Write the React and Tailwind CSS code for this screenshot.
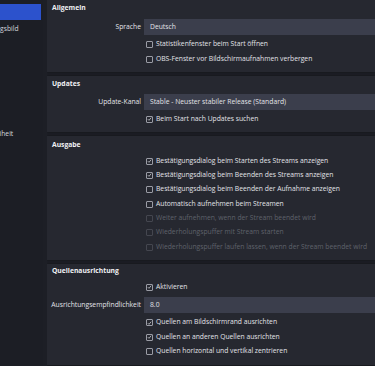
import React from "react";

const font = { fontFamily: "'Open Sans', 'Noto Sans', sans-serif" };

const sidebarItems = [
  "Allgemein",
  "Erscheinungsbild",
  "Stream",
  "Ausgabe",
  "Audio",
  "Video",
  "Hotkeys",
  "Barrierefreiheit",
  "Erweitert",
];

const Check = ({ checked, disabled, label, h = "h-[14.5px]" }) => (
  <div className={`flex items-center ${h}`}>
    <div className="w-[97px] shrink-0" />
    <div
      className={`ml-[2px] w-[7px] h-[7px] rounded-[1px] border flex items-center justify-center ${
        disabled ? "border-[#44464f]" : "border-[#9a9ca5]"
      }`}
    >
      {checked && (
        <svg width="6" height="6" viewBox="0 0 6 6">
          <path d="M1 3.2 L2.4 4.6 L5 1.4" stroke="#d8d9de" strokeWidth="0.9" fill="none" />
        </svg>
      )}
    </div>
    <span
      className={`ml-[3px] whitespace-nowrap ${
        disabled ? "text-[#5f626b]" : "text-[#e2e3e8]"
      }`}
    >
      {label}
    </span>
  </div>
);

const Field = ({ label, value, h = "h-[16px]" }) => (
  <div className={`flex items-center ${h}`}>
    <div className="w-[94px] shrink-0 text-right text-[#e2e3e8] whitespace-nowrap">{label}</div>
    <div className="ml-[3px] flex-1 h-full bg-[#3b3e4c] flex items-center pl-[6px] text-[#e2e3e8] whitespace-nowrap">
      {value}
    </div>
  </div>
);

const Box = ({ title, className = "", children }) => (
  <div className={`bg-[#262830] shadow-[0_0_2px_rgba(0,0,0,0.5)] ${className}`}>
    <div className="pl-[5px] h-[10px] leading-[10px] font-bold text-[#f0f1f4]">{title}</div>
    {children}
  </div>
);

export default function App() {
  return (
    <div
      className="w-[375px] h-[366px] overflow-hidden bg-[#1d1f26] flex text-[6.75px] leading-none"
      style={font}
    >
      {/* sidebar */}
      <div className="w-[43px] shrink-0 pr-[2px] pt-[4px] flex flex-col gap-[1.5px] bg-[#1c1e25] overflow-hidden">
        {sidebarItems.map((item, i) => (
          <div
            key={item}
            className={`h-[16px] flex items-center overflow-hidden ${
              i === 0 ? "bg-[#2c52cc]" : ""
            }`}
          >
            <span className="ml-[-35px] whitespace-nowrap text-[#d6d8de]">{item}</span>
          </div>
        ))}
      </div>

      {/* content */}
      <div className="flex-1 ml-[4px] flex flex-col overflow-hidden">
        <Box title="Allgemein" className="pt-[3px] pb-[5px]">
          <div className="mt-[6px]">
            <Field label="Sprache" value="Deutsch" />
          </div>
          <div className="mt-[2px]">
            <Check label="Statistikenfenster beim Start öffnen" h="h-[15px]" />
            <Check label="OBS-Fenster vor Bildschirmaufnahmen verbergen" h="h-[15px]" />
          </div>
        </Box>

        <Box title="Updates" className="mt-[4px] pt-[3px] pb-[6px]">
          <div className="mt-[5px]">
            <Field label="Update-Kanal" value="Stable - Neuster stabiler Release (Standard)" />
          </div>
          <div className="mt-[2px]">
            <Check checked label="Beim Start nach Updates suchen" h="h-[14px]" />
          </div>
        </Box>

        <Box title="Ausgabe" className="mt-[4px] pt-[4px] pb-[6px]">
          <div className="mt-[4px]">
            <Check checked label="Bestätigungsdialog beim Starten des Streams anzeigen" h="h-[14.33px]" />
            <Check checked label="Bestätigungsdialog beim Beenden des Streams anzeigen" h="h-[14.33px]" />
            <Check label="Bestätigungsdialog beim Beenden der Aufnahme anzeigen" h="h-[14.33px]" />
            <Check label="Automatisch aufnehmen beim Streamen" h="h-[14.33px]" />
            <Check disabled label="Weiter aufnehmen, wenn der Stream beendet wird" h="h-[14.33px]" />
            <Check disabled label="Wiederholungspuffer mit Stream starten" h="h-[14.33px]" />
            <Check
              disabled
              label="Wiederholungspuffer laufen lassen, wenn der Stream beendet wird"
              h="h-[14.33px]"
            />
          </div>
        </Box>

        <Box title="Quellenausrichtung" className="mt-[4px] pt-[2px] pb-[6px]">
          <div className="mt-[4px]">
            <Check checked label="Aktivieren" h="h-[14px]" />
          </div>
          <div className="mt-[3px]">
            <Field label="Ausrichtungsempfindlichkeit" value="8.0" />
          </div>
          <div className="mt-[2px]">
            <Check checked label="Quellen am Bildschirmrand ausrichten" />
            <Check checked label="Quellen an anderen Quellen ausrichten" />
            <Check label="Quellen horizontal und vertikal zentrieren" />
          </div>
        </Box>
      </div>
    </div>
  );
}
